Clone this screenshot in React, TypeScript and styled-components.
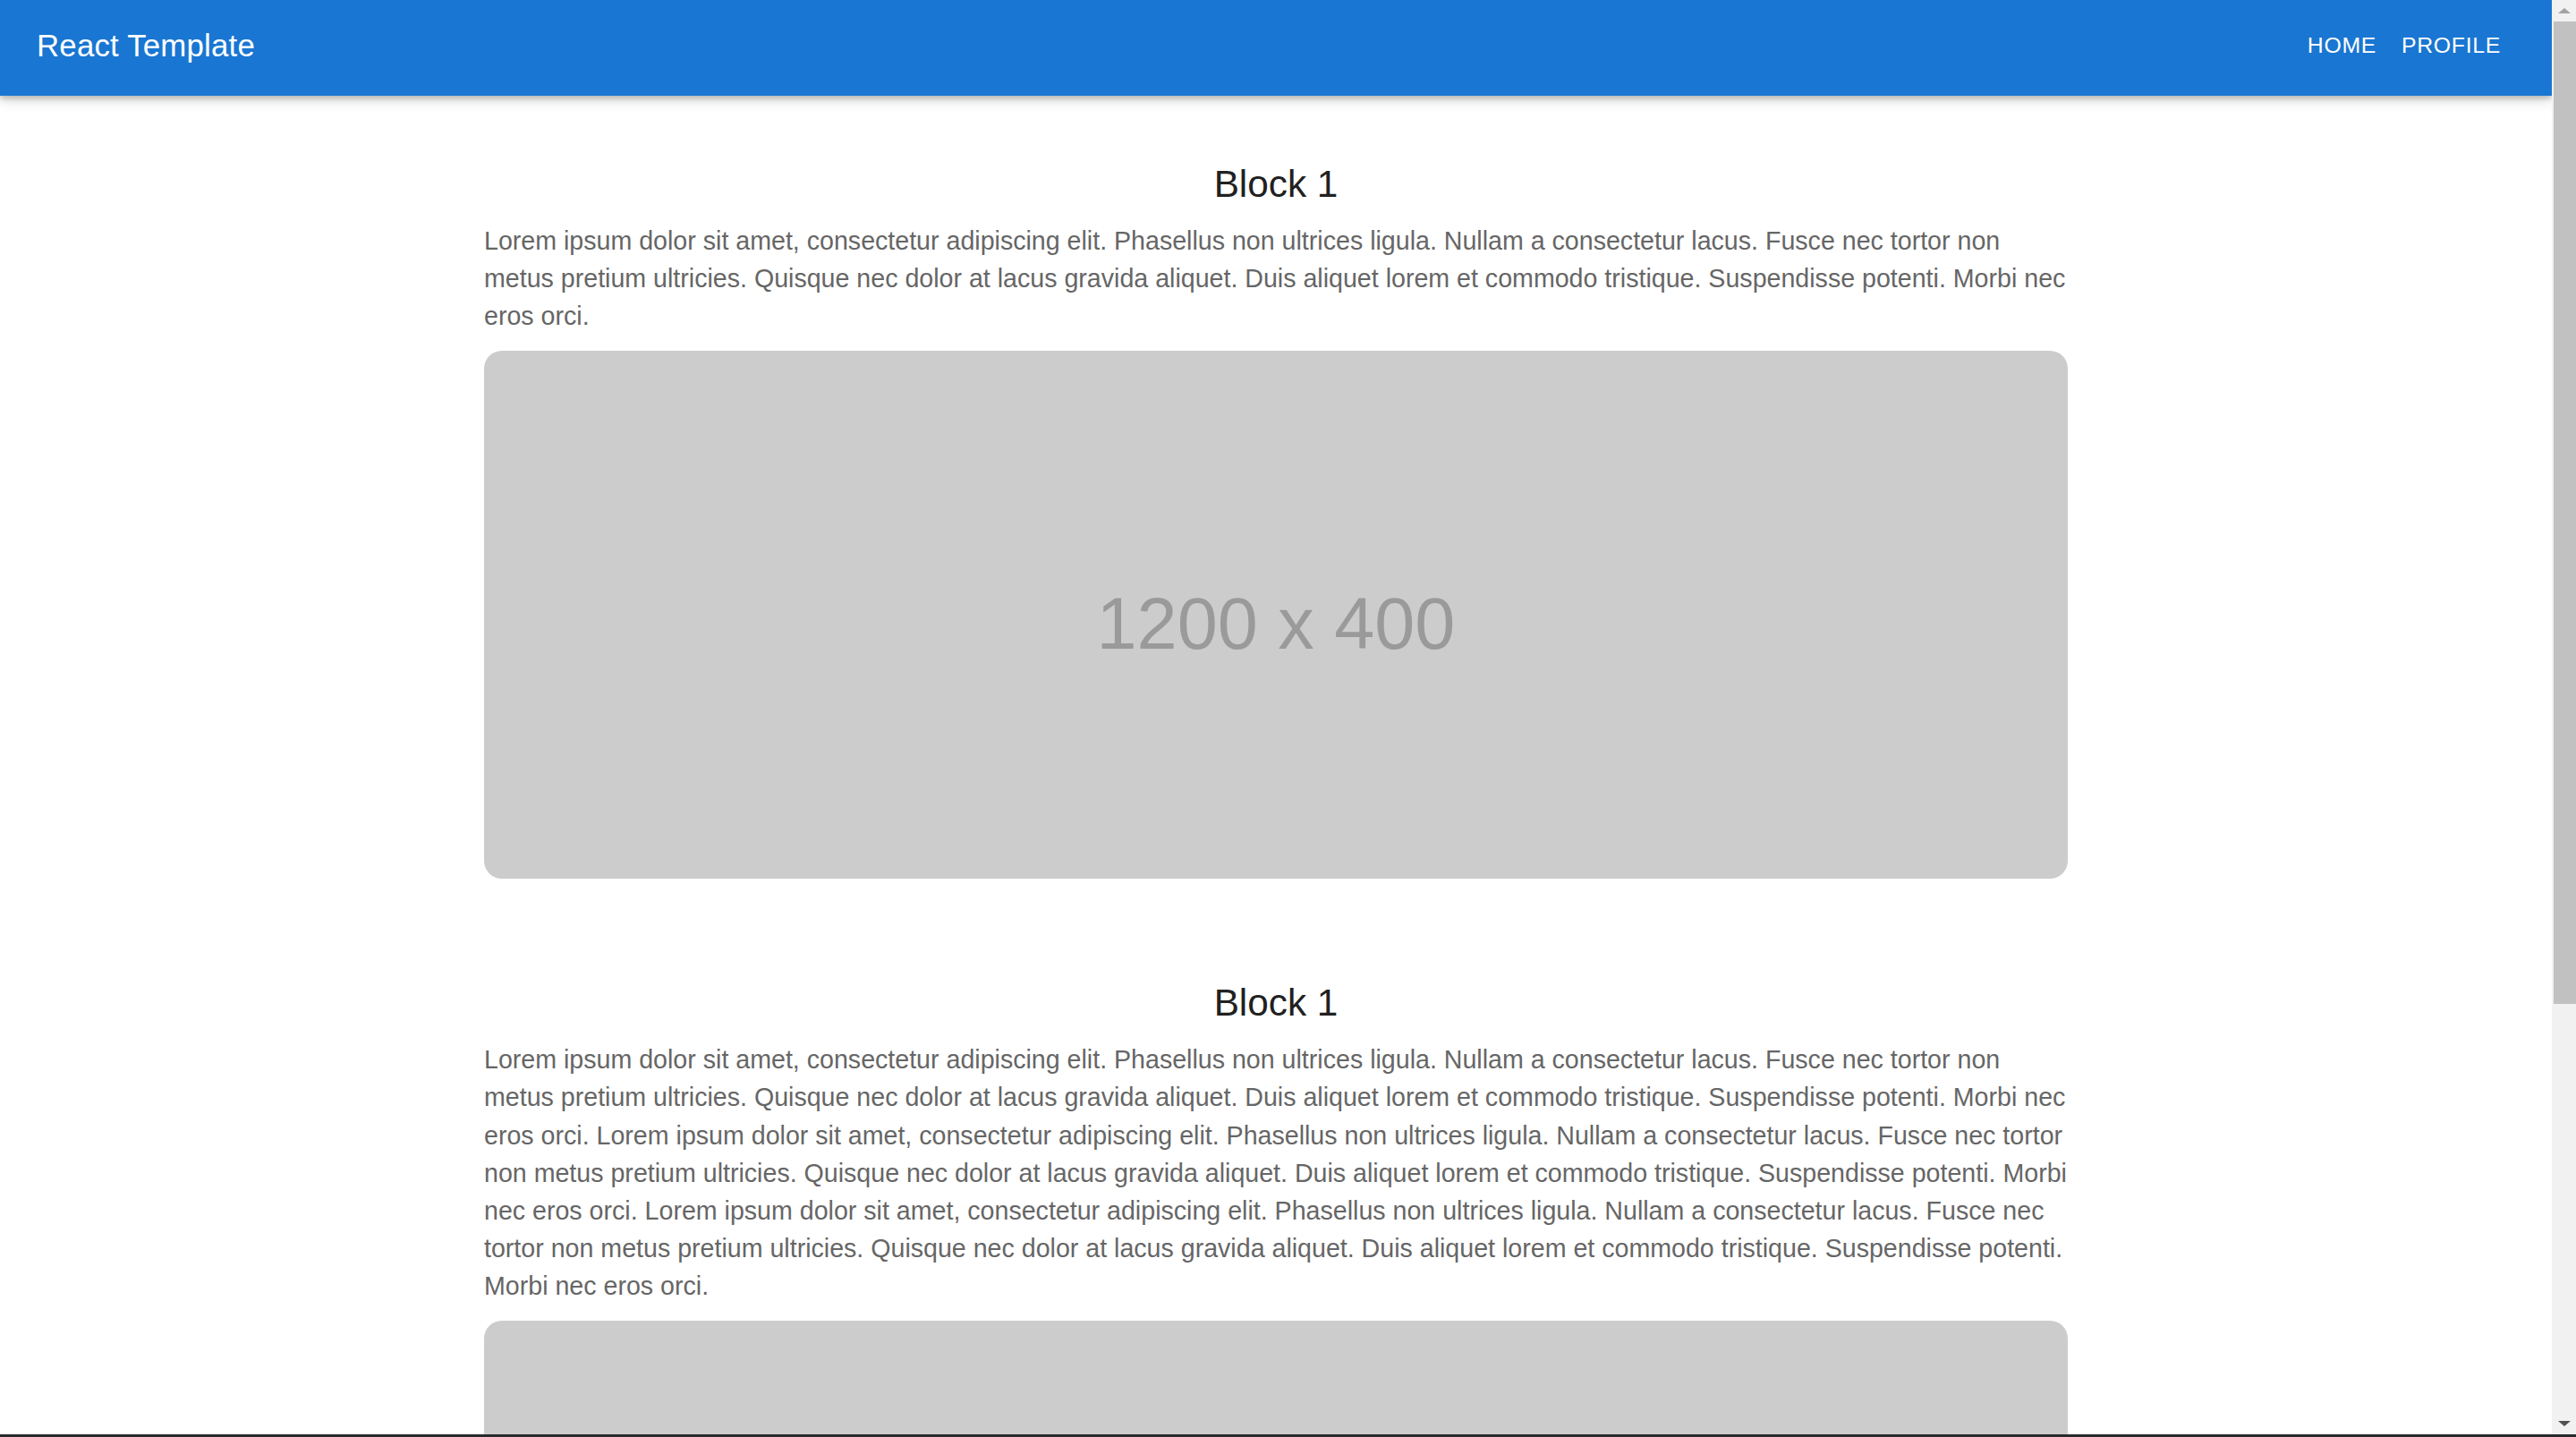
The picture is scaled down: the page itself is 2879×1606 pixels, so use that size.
import React from "react";
import styled, { createGlobalStyle } from "styled-components";

const GlobalStyle = createGlobalStyle`
  html, body {
    margin: 0;
    padding: 0;
    height: 100%;
    overflow: hidden;
    background: #ffffff;
  }
  body {
    font-family: "Liberation Sans", Arial, sans-serif;
  }
  #root {
    height: 100%;
  }
`;

const Frame = styled.div`
  height: 100vh;
  display: flex;
  flex-direction: column;
  box-sizing: border-box;
  border-bottom: 3px solid #2a2a2a;
`;

const Viewport = styled.div`
  flex: 1;
  min-height: 0;
  display: flex;
  flex-direction: row;
`;

const Page = styled.div`
  flex: 1;
  min-width: 0;
  overflow: hidden;
  display: flex;
  flex-direction: column;
  background: #ffffff;
`;

const AppBar = styled.header`
  position: relative;
  z-index: 2;
  height: 107px;
  flex-shrink: 0;
  box-sizing: border-box;
  background: #1976d2;
  display: flex;
  align-items: center;
  justify-content: space-between;
  padding: 0 43px 6px 41px;
  box-shadow: 0 3px 6px rgba(0, 0, 0, 0.22), 0 6px 14px rgba(0, 0, 0, 0.12);
`;

const Brand = styled.div`
  color: #ffffff;
  font-size: 34.8px;
  font-weight: 400;
  letter-spacing: 0.2px;
`;

const Nav = styled.nav`
  display: flex;
  align-items: center;
`;

const NavButton = styled.button`
  background: transparent;
  border: none;
  color: #ffffff;
  font-family: "Liberation Sans", Arial, sans-serif;
  font-size: 24.8px;
  letter-spacing: 0.7px;
  text-transform: uppercase;
  padding: 0 14px;
  cursor: pointer;
`;

const Content = styled.main`
  padding-top: 71px;
  display: flex;
  flex-direction: column;
  align-items: center;
`;

const Block = styled.section`
  width: 1770px;
  display: flex;
  flex-direction: column;
  margin-bottom: 111px;
`;

const BlockTitle = styled.h2`
  margin: 0;
  font-size: 42.3px;
  line-height: 56px;
  font-weight: 400;
  color: #212121;
  text-align: center;
`;

const BlockText = styled.p`
  margin: 14px -6px 0 0;
  font-size: 28.6px;
  line-height: 42.2px;
  color: #666666;
`;

const Placeholder = styled.div`
  margin-top: 17.5px;
  width: 1770px;
  height: 590px;
  flex-shrink: 0;
  box-sizing: border-box;
  border-radius: 20px;
  background: #cccccc;
  color: #9a9a9a;
  font-size: 81px;
  display: flex;
  align-items: center;
  justify-content: center;
  padding-top: 20px;
`;

const ScrollBar = styled.div`
  width: 27px;
  flex-shrink: 0;
  background: #f1f1f1;
  display: flex;
  flex-direction: column;
`;

const ScrollButton = styled.div`
  height: 24px;
  flex-shrink: 0;
  display: flex;
  align-items: center;
  justify-content: center;
`;

const Arrow = styled.div<{ $dir: "up" | "down"; $color: string }>`
  width: 0;
  height: 0;
  border-left: 7px solid transparent;
  border-right: 7px solid transparent;
  ${(p) =>
    p.$dir === "up"
      ? `border-bottom: 6px solid ${p.$color};`
      : `border-top: 6px solid ${p.$color};`}
`;

const Track = styled.div`
  flex: 1;
  display: flex;
  flex-direction: column;
  padding: 0 0 0 2px;
`;

const Thumb = styled.div`
  height: 1098px;
  background: #c1c1c1;
`;

const lorem =
  "Lorem ipsum dolor sit amet, consectetur adipiscing elit. Phasellus non ultrices ligula. Nullam a consectetur lacus. Fusce nec tortor non metus pretium ultricies. Quisque nec dolor at lacus gravida aliquet. Duis aliquet lorem et commodo tristique. Suspendisse potenti. Morbi nec eros orci.";

const blocks = [
  { title: "Block 1", text: lorem },
  { title: "Block 1", text: [lorem, lorem, lorem].join(" ") },
];

export default function App() {
  return (
    <>
      <GlobalStyle />
      <Frame>
        <Viewport>
          <Page>
            <AppBar>
              <Brand>React Template</Brand>
              <Nav>
                <NavButton>Home</NavButton>
                <NavButton>Profile</NavButton>
              </Nav>
            </AppBar>
            <Content>
              {blocks.map((b, i) => (
                <Block key={i}>
                  <BlockTitle>{b.title}</BlockTitle>
                  <BlockText>{b.text}</BlockText>
                  <Placeholder>1200 x 400</Placeholder>
                </Block>
              ))}
            </Content>
          </Page>
          <ScrollBar>
            <ScrollButton>
              <Arrow $dir="up" $color="#a3a3a3" />
            </ScrollButton>
            <Track>
              <Thumb />
            </Track>
            <ScrollButton>
              <Arrow $dir="down" $color="#505050" />
            </ScrollButton>
          </ScrollBar>
        </Viewport>
      </Frame>
    </>
  );
}
